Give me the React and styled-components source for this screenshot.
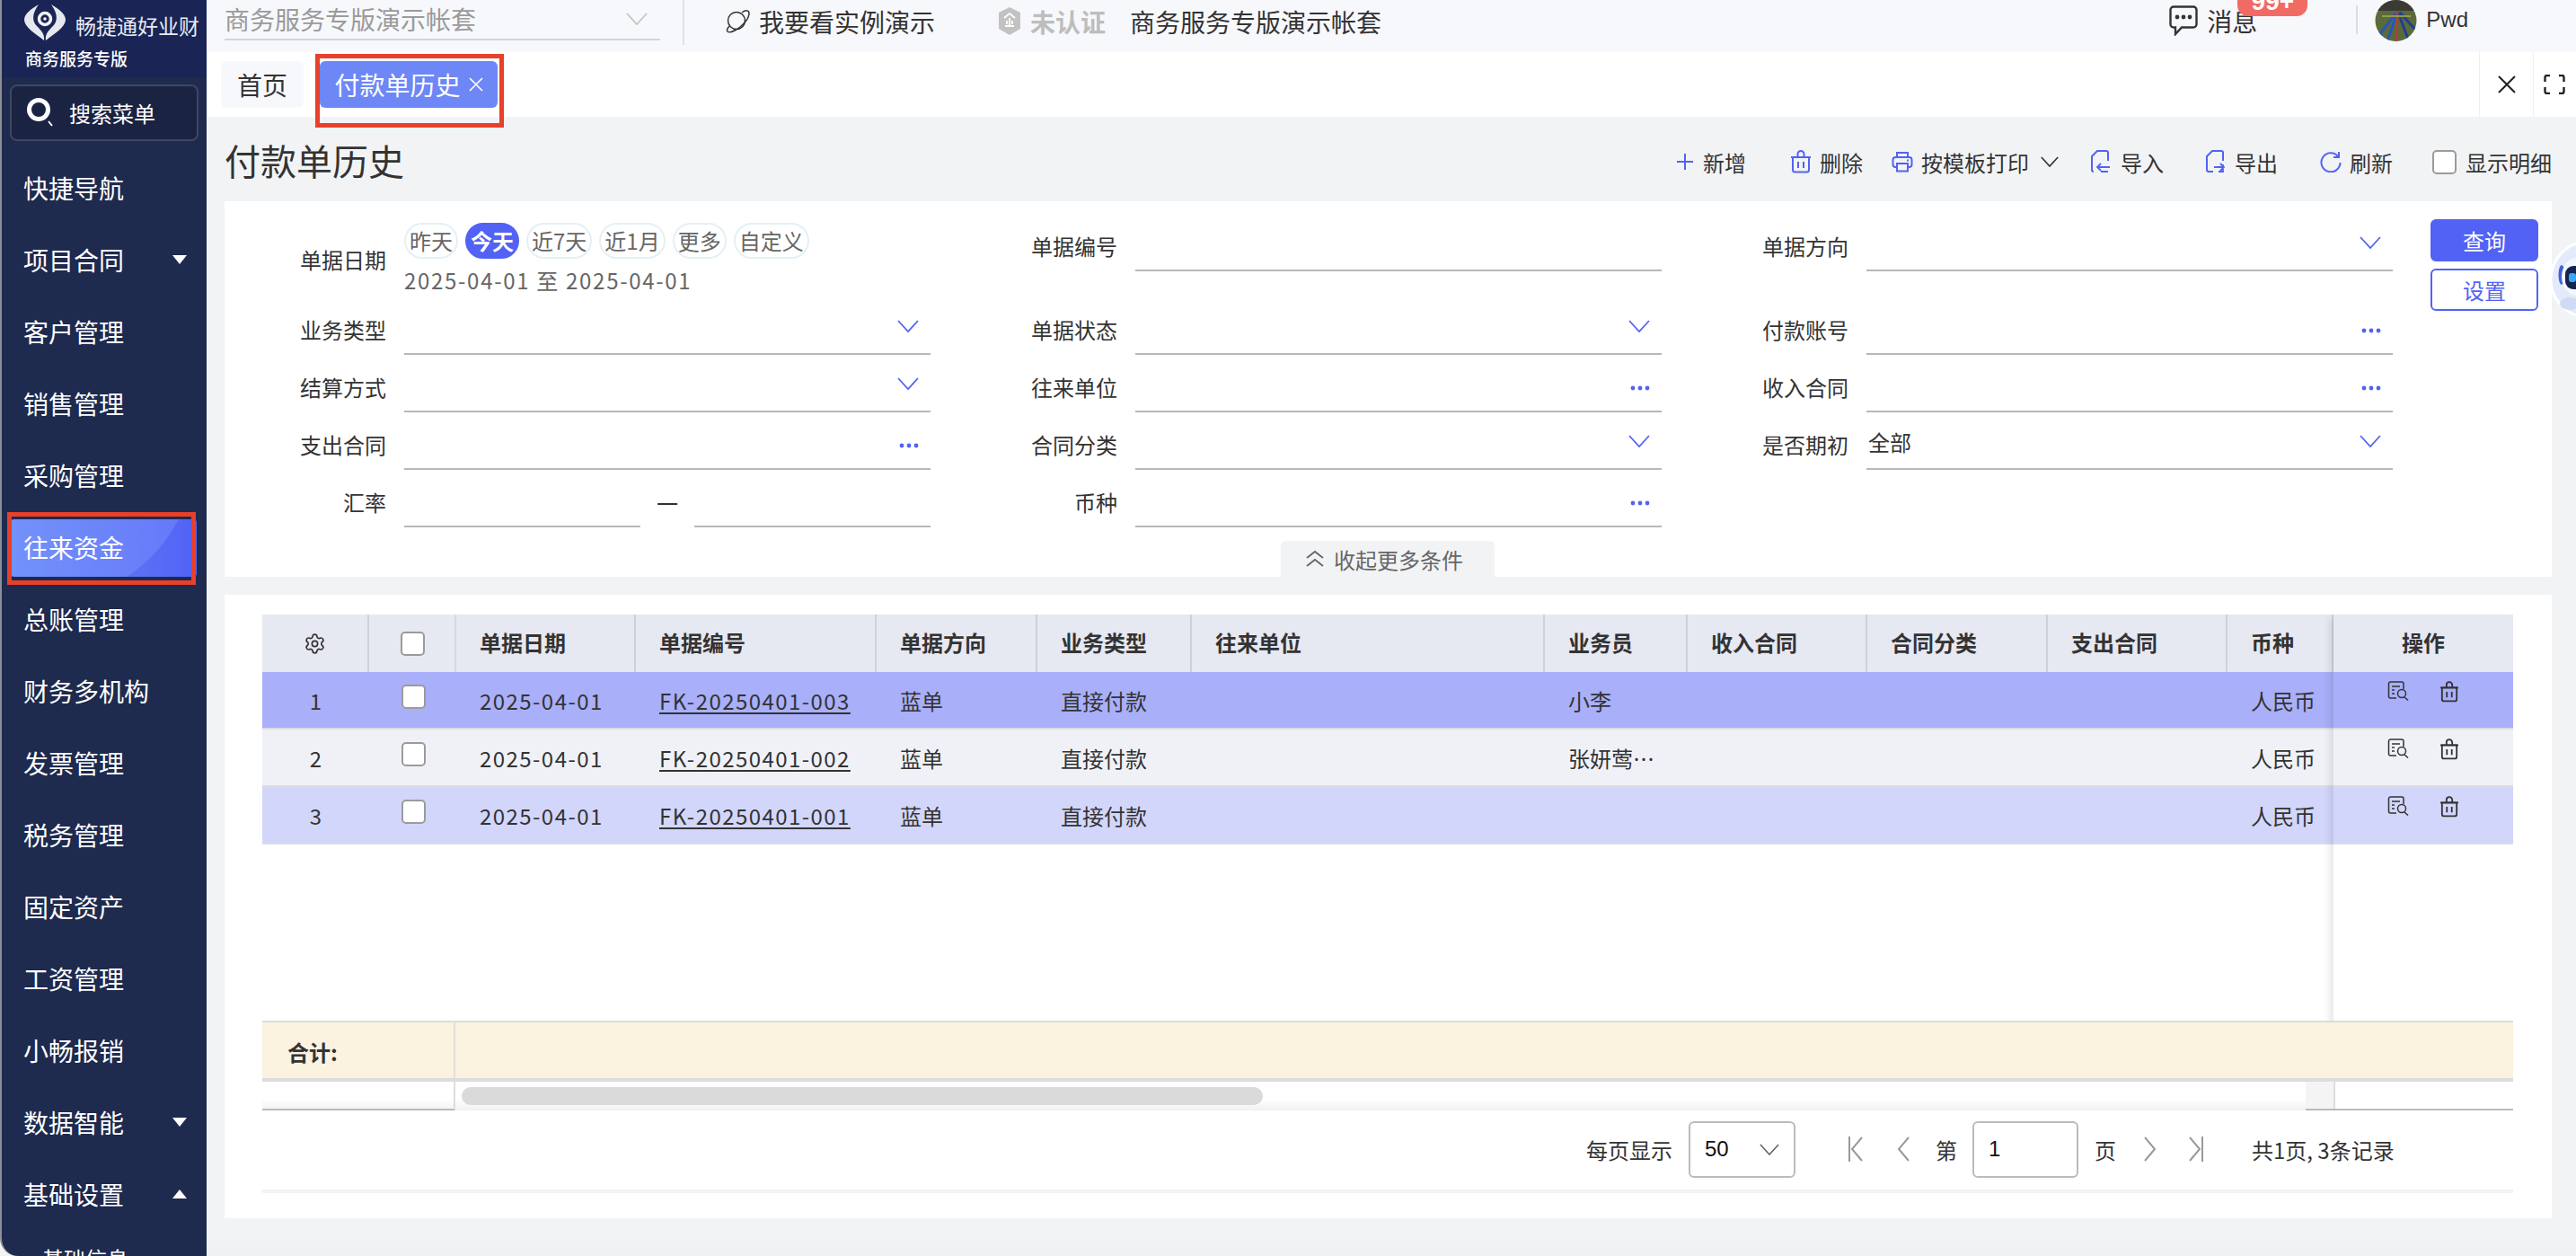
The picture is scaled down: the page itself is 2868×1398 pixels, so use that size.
import React from "react";
import styled, { createGlobalStyle } from "styled-components";
import { Settings } from "lucide-react";

const GlobalStyle = createGlobalStyle`
  html, body {
    margin: 0;
    padding: 0;
    width: 2868px;
    height: 1398px;
    overflow: hidden;
    background: #f2f3f5;
    font-family: "Noto Sans CJK SC", "Liberation Sans", sans-serif;
    color: #333;
  }
  * {
    box-sizing: border-box;
  }
`;

const menus = [
  { name: "快捷导航" },
  { name: "项目合同", arrow: "down" },
  { name: "客户管理" },
  { name: "销售管理" },
  { name: "采购管理" },
  { name: "往来资金", active: true },
  { name: "总账管理" },
  { name: "财务多机构" },
  { name: "发票管理" },
  { name: "税务管理" },
  { name: "固定资产" },
  { name: "工资管理" },
  { name: "小畅报销" },
  { name: "数据智能", arrow: "down" },
  { name: "基础设置", arrow: "up" },
];

const chips = ["昨天", "今天", "近7天", "近1月", "更多", "自定义"];

const columns = [
  { title: "单据日期", width: 200 },
  { title: "单据编号", width: 268 },
  { title: "单据方向", width: 179 },
  { title: "业务类型", width: 172 },
  { title: "往来单位", width: 393 },
  { title: "业务员", width: 159 },
  { title: "收入合同", width: 200 },
  { title: "合同分类", width: 201 },
  { title: "支出合同", width: 200 },
  { title: "币种", width: 118 },
];

const rows = [
  { no: "FK-20250401-003", man: "小李", bg: "#a9aff9" },
  { no: "FK-20250401-002", man: "张妍莺…", bg: "#f0f1f7" },
  { no: "FK-20250401-001", man: "", bg: "#d3d6fb" },
];

const ChevronDown = ({ color = "#5262f5", w = 24, h = 14 }) => (
  <svg width={w} height={h} viewBox="0 0 24 14" fill="none">
    <path d="M1 1 L12 13 L23 1" stroke={color} strokeWidth="1.8" />
  </svg>
);

const DotsWrap = styled.svg`
  && {
    margin-top: 12px;
  }
`;

const Dots = () => (
  <DotsWrap width="22" height="6" viewBox="0 0 22 6">
    <circle cx="3" cy="3" r="2.4" fill="#5262f5" />
    <circle cx="11" cy="3" r="2.4" fill="#5262f5" />
    <circle cx="19" cy="3" r="2.4" fill="#5262f5" />
  </DotsWrap>
);

const TrashIcon = ({ color = "#5262f5", size = 22 }) => (
  <svg width={size} height={size + 4} viewBox="0 0 22 26" fill="none" stroke={color} strokeWidth="2">
    <path d="M2 8 H20 V22 a2.5 2.5 0 0 1 -2.5 2.5 H4.5 A2.5 2.5 0 0 1 2 22 Z" />
    <path d="M0 8 H22" />
    <path d="M7.5 8 V4.5 a3.5 3.5 0 0 1 7 0 V8" />
    <path d="M8 13 V20 M14 13 V20" />
  </svg>
);

const PrintIcon = () => (
  <svg width="24" height="24" viewBox="0 0 24 24" fill="none" stroke="#5262f5" strokeWidth="2">
    <path d="M6 7 V2 H18 V7" />
    <rect x="1.5" y="7" width="21" height="11" rx="3" />
    <rect x="6" y="14" width="12" height="8.5" fill="#f2f3f5" />
    <path d="M17 10.5 H19" />
  </svg>
);

const FileIcon = ({ out }) => (
  <svg width="22" height="26" viewBox="0 0 22 26" fill="none" stroke="#5262f5" strokeWidth="2">
    <path d="M3 24 a2 2 0 0 1 -2 -2 V7 L7 1 H17 a2 2 0 0 1 2 2 V12" />
    {out ? (
      <path d="M8 24 H3 M19 16 V24 H14 M9 19 H20 M16 15 L20 19 L16 23" strokeWidth="1.8" />
    ) : (
      <path d="M19 24 H11 M21 19 H7 M11 15 L7 19 L11 23" strokeWidth="1.8" />
    )}
  </svg>
);

const RefreshIcon = () => (
  <svg width="24" height="24" viewBox="0 0 24 24" fill="none" stroke="#5262f5" strokeWidth="2">
    <path d="M20 6 A10.5 10.5 0 1 0 22.5 13" />
    <path d="M21 1 V7 H15" />
  </svg>
);

const Logo = () => (
  <svg width="48" height="44" viewBox="0 0 48 44">
    <path d="M17 1 C8 6 1 12 1 18 C1 26 14 34 23 41 C24 34 20 30 15 25 C10 20 9 12 17 1 Z" fill="#e6e8ef" />
    <path d="M31 1 C40 6 47 12 47 18 C47 26 34 34 25 41 C24 34 28 30 33 25 C38 20 39 12 31 1 Z" fill="#e6e8ef" />
    <circle cx="24" cy="17" r="6.5" fill="none" stroke="#f2f3f7" strokeWidth="3.5" />
    <circle cx="24" cy="17" r="1.8" fill="#f2f3f7" />
  </svg>
);

const Robot = () => (
  <svg width="29" height="90" viewBox="0 0 29 90">
    <circle cx="43" cy="45" r="42" fill="#e3eafa" stroke="#fff" strokeWidth="3" />
    <ellipse cx="13" cy="40" rx="3.5" ry="11" fill="#3f63d8" />
    <ellipse cx="30" cy="42" rx="17" ry="21" fill="#f4f7fe" />
    <rect x="17" y="30" width="20" height="26" rx="9" fill="#14244f" />
    <rect x="21" y="38" width="8" height="10" rx="3" fill="#38a8f5" />
    <ellipse cx="22" cy="72" rx="11" ry="7" fill="#cfdaf4" />
  </svg>
);

const Page = styled.div`
  width: 2868px;
  height: 1398px;
  display: flex;
  position: relative;
  overflow: hidden;
  background: #f2f3f5;
`;

const Sidebar = styled.aside`
  width: 230px;
  flex: none;
  height: 1398px;
  background: #1e2a4e;
  border-left: 2px solid #8d8f96;
  border-bottom-left-radius: 20px;
  overflow: hidden;
  color: #fff;
`;

const Brand = styled.div`
  height: 86px;
  background: #1a2555;
  padding: 4px 0 0 24px;
`;

const BrandTop = styled.div`
  display: flex;
  align-items: flex-start;
  gap: 11px;
  height: 46px;
`;

const BrandName = styled.span`
  font-size: 23px;
  line-height: 26px;
  margin-top: 11px;
  margin-left: -1px;
  color: #e9ebf2;
  white-space: nowrap;
`;

const BrandSub = styled.div`
  font-size: 19px;
  line-height: 26px;
  margin-top: 2px;
  margin-left: 2px;
  font-weight: 500;
`;

const SearchBox = styled.div`
  height: 63px;
  margin: 8px 9px 0 9px;
  background: #1a2342;
  border: 2px solid #3c4762;
  border-radius: 8px;
  display: flex;
  align-items: center;
  gap: 17px;
  padding-left: 17px;
  font-size: 24px;
`;

const MenuList = styled.nav`
  margin-top: 12px;
`;

const MenuItem = styled.div`
  height: 80px;
  display: flex;
  align-items: center;
  justify-content: space-between;
  padding: 0 22px 0 24px;
  font-size: 28px;
  position: relative;
`;

const ActiveItem = styled(MenuItem)`
  &::before {
    content: "";
    position: absolute;
    left: 10px;
    right: 11px;
    top: 9px;
    bottom: 7px;
    border-radius: 4px;
    background:
      radial-gradient(circle 165px at 40px -74px, rgba(128, 150, 255, 0.4) 99%, transparent 100%),
      linear-gradient(90deg, #6a8ff6, #5262f5);
  }
  span {
    position: relative;
  }
`;

const Marker = styled.div`
  position: absolute;
  border: 5px solid #e8402a;
  pointer-events: none;
  left: ${(p) => p.$left}px;
  top: ${(p) => p.$top}px;
  width: ${(p) => p.$width}px;
  height: ${(p) => p.$height}px;
`;

const Triangle = styled.i`
  width: 0;
  height: 0;
  border-left: 8px solid transparent;
  border-right: 8px solid transparent;
  ${(p) => (p.$up ? "border-bottom: 10px solid #fff;" : "border-top: 10px solid #fff;")}
`;

const SubItem = styled.div`
  padding-left: 45px;
  margin-top: 14px;
  font-size: 24px;
`;

const Main = styled.main`
  flex: 1;
  min-width: 0;
  display: flex;
  flex-direction: column;
`;

const TopBar = styled.header`
  height: 58px;
  background: #f7f8fc;
  display: flex;
  align-items: flex-start;
  padding-left: 20px;
  font-size: 28px;
  line-height: 48px;
`;

const AccountSelect = styled.div`
  width: 485px;
  height: 45px;
  border-bottom: 2px solid #d4d4d6;
  color: #9a9a9a;
  display: flex;
  justify-content: space-between;
  padding-right: 14px;
  line-height: 42px;
  svg {
    margin-top: 14px;
  }
`;

const VLine = styled.div`
  width: 2px;
  height: 50px;
  background: #e0e1e6;
  margin-left: 25px;
`;

const TopLink = styled.div`
  display: flex;
  align-items: center;
  height: 48px;
  gap: 10px;
  margin-left: ${(p) => p.$ml || 0}px;
  color: ${(p) => p.$color || "#333"};
  white-space: nowrap;
`;

const TopRight = styled.div`
  margin-left: auto;
  display: flex;
  align-items: flex-start;
`;

const MessageBox = styled.div`
  position: relative;
  display: flex;
  align-items: center;
  gap: 10px;
  height: 46px;
  width: 208px;
`;

const Badge = styled.span`
  position: absolute;
  left: 76px;
  top: -14px;
  width: 78px;
  height: 32px;
  background: #f26a64;
  border-radius: 12px;
  color: #fff;
  font-weight: 700;
  font-size: 28px;
  line-height: 32px;
  text-align: center;
  font-family: "Liberation Sans", sans-serif;
`;

const Divider = styled.div`
  width: 2px;
  height: 32px;
  margin-top: 6px;
  background: #dcdde2;
`;

const UserName = styled.span`
  font-family: "Liberation Sans", sans-serif;
  font-size: 24px;
  line-height: 44px;
  margin-left: 10px;
  margin-right: 120px;
`;

const Avatar = styled.svg`
  margin-left: 19px;
  display: block;
`;

const TabBar = styled.div`
  height: 72px;
  background: #fff;
  display: flex;
  align-items: flex-start;
  padding: 10px 0 0 16px;
  gap: 18px;
`;

const Tab = styled.div`
  height: 52px;
  border-radius: 6px;
  display: flex;
  align-items: center;
  justify-content: center;
  font-size: 28px;
  gap: 9px;
  white-space: nowrap;
  width: ${(p) => (p.$active ? "198px" : "92px")};
  background: ${(p) => (p.$active ? "#6e87f7" : "#f7f8fc")};
  color: ${(p) => (p.$active ? "#fff" : "#333")};
`;

const TabTools = styled.div`
  margin: -10px 0 0 auto;
  display: flex;
  height: 72px;
`;

const TabTool = styled.div`
  width: 60px;
  display: flex;
  align-items: center;
  justify-content: center;
  border-left: 1px solid #eeeff2;
  &:last-child {
    width: 48px;
    padding-right: 12px;
    justify-content: flex-end;
  }
`;

const Content = styled.div`
  flex: 1;
  min-height: 0;
  padding: 0 27px 0 20px;
  background: linear-gradient(#f2f3f5 1240px, #e8e9ec 1340px);
`;

const TitleRow = styled.div`
  height: 94px;
  display: flex;
  align-items: center;
`;

const Title = styled.h1`
  margin: 0;
  font-size: 40px;
  font-weight: 400;
  color: #333;
  position: relative;
  top: 1px;
`;

const Toolbar = styled.div`
  margin: 6px 0 0 auto;
  display: flex;
  align-items: center;
  height: 40px;
  font-size: 24px;
`;

const ToolBtn = styled.div`
  display: flex;
  align-items: center;
  gap: ${(p) => p.$gap || 10}px;
  margin-left: ${(p) => p.$ml}px;
  white-space: nowrap;
`;

const ToolCaret = styled.svg`
  margin-left: 4px;
`;

const CheckBox = styled.i`
  display: block;
  flex: none;
  width: 27px;
  height: 27px;
  border: 2px solid #9b9b9b;
  border-radius: 5px;
  background: #fff;
`;

const FilterPanel = styled.section`
  position: relative;
  height: 418px;
  background: #fff;
  display: flex;
  align-items: flex-start;
`;

const FilterGrid = styled.div`
  width: 2414px;
  padding-top: 14px;
  display: grid;
  grid-template-columns: repeat(3, 786px);
  column-gap: 28px;
  grid-auto-rows: 64px;
  grid-template-rows: 93px;
`;

const Field = styled.div`
  display: grid;
  grid-template-columns: 180px 586px;
  column-gap: 20px;
  align-items: start;
  font-size: 24px;
`;

const FieldLabel = styled.label`
  text-align: right;
  line-height: 34px;
  padding-top: ${(p) => p.$top || 19}px;
  color: #333;
`;

const InputLine = styled.div`
  height: 64px;
  border-bottom: 2px solid #b8b8b8;
  display: flex;
  align-items: center;
  justify-content: space-between;
  padding: 0 13px 0 2px;
  color: #333;
  line-height: 34px;
  > svg {
    margin-top: 2px;
  }
`;

const InputValue = styled.span`
  margin-top: 4px;
`;

const RangeRow = styled.div`
  display: grid;
  grid-template-columns: 263px 60px 263px;
`;

const RangeDash = styled.div`
  text-align: center;
  line-height: 34px;
  padding-top: 20px;
`;

const DateBlock = styled.div`
  padding-top: 10px;
`;

const ChipRow = styled.div`
  display: flex;
  gap: 8px;
`;

const Chip = styled.span`
  height: 40px;
  padding: 0 4px;
  border-radius: 20px;
  border: 2px solid ${(p) => (p.$active ? "#5262f5" : "#e4f0f5")};
  background: ${(p) => (p.$active ? "#5262f5" : "#fff")};
  color: ${(p) => (p.$active ? "#fff" : "#666")};
  font-weight: ${(p) => (p.$active ? 700 : 400)};
  font-size: 24px;
  line-height: 35px;
  white-space: nowrap;
`;

const DateText = styled.div`
  margin-top: 7px;
  color: #666;
  line-height: 34px;
  letter-spacing: 1.7px;
  white-space: nowrap;
`;

const QueryBtns = styled.div`
  margin-left: 42px;
  padding-top: 20px;
  display: flex;
  flex-direction: column;
  gap: 8px;
  width: 120px;
`;

const QueryBtn = styled.div`
  height: 47px;
  border-radius: 6px;
  border: 2px solid #5262f5;
  font-size: 24px;
  line-height: 43px;
  text-align: center;
  background: ${(p) => (p.$primary ? "#5262f5" : "#fff")};
  color: ${(p) => (p.$primary ? "#fff" : "#5262f5")};
`;

const Collapse = styled.div`
  position: absolute;
  left: 1176px;
  bottom: 0;
  width: 238px;
  height: 40px;
  padding-right: 8px;
  background: #f2f3f5;
  border-radius: 6px 6px 0 0;
  display: flex;
  align-items: center;
  justify-content: center;
  gap: 10px;
  font-size: 24px;
  color: #666;
`;

const TablePanel = styled.section`
  margin-top: 20px;
  height: 694px;
  background: #fff;
  padding: 22px 0 0 42px;
  position: relative;
`;

const TableWrap = styled.div`
  position: relative;
  width: 2506px;
`;

const HeadRow = styled.div`
  display: flex;
  height: 64px;
  background: #e6e8f2;
  font-weight: 700;
  font-size: 24px;
  line-height: 62px;
`;

const BodyRow = styled.div`
  display: flex;
  height: 64px;
  padding-top: 2px;
  background: ${(p) => p.$bg};
  border-bottom: 2px solid #dcdce4;
  font-size: 24px;
  line-height: 60px;
`;

const Cell = styled.div`
  flex: none;
  width: ${(p) => p.$w}px;
  padding-left: 26px;
  white-space: nowrap;
  overflow: hidden;
`;

const HeadCell = styled(Cell)`
  border-right: 2px solid #d0d1d8;
`;

const IndexCell = styled.div`
  flex: none;
  width: 119px;
  display: flex;
  align-items: center;
  justify-content: center;
`;

const HeadIndex = styled(IndexCell)`
  border-right: 2px solid #d0d1d8;
`;

const CheckCell = styled.div`
  flex: none;
  width: 97px;
  display: flex;
  align-items: center;
  padding-left: ${(p) => p.$pl}px;
  padding-bottom: ${(p) => p.$pb || 0}px;
`;

const HeadCheck = styled(CheckCell)`
  border-right: 2px solid #d8d9e0;
`;

const NumText = styled.span`
  letter-spacing: 1.45px;
`;

const LinkText = styled(NumText)`
  text-decoration: underline;
  text-decoration-thickness: 2px;
  text-underline-offset: 3px;
`;

const ActionCol = styled.div`
  position: absolute;
  right: 0;
  top: 0;
  width: 200px;
  height: 552px;
  box-shadow: -8px 0 8px -4px rgba(0, 0, 0, 0.1);
  background: #fff;
  display: flex;
  flex-direction: column;
`;

const ActionHead = styled.div`
  height: 64px;
  background: #e6e8f2;
  text-align: center;
  font-size: 24px;
  font-weight: 700;
  line-height: 62px;
`;

const ActionCell = styled.div`
  height: 64px;
  background: ${(p) => p.$bg};
  border-bottom: 2px solid #dcdce4;
  display: flex;
  align-items: flex-start;
  gap: 35px;
  padding: 10px 0 0 60px;
`;

const Spacer = styled.div`
  height: 196px;
`;

const TotalRow = styled.div`
  position: relative;
  height: 68px;
  background: #fbf2df;
  border-top: 2px solid #dcdcdc;
  border-bottom: 4px solid #dcdcdc;
  display: flex;
  font-size: 24px;
  font-weight: 700;
  line-height: 66px;
`;

const TotalLabel = styled.div`
  width: 215px;
  padding-left: 28px;
  border-right: 2px solid #e2e0da;
`;

const ScrollRow = styled.div`
  height: 32px;
  display: flex;
  background: linear-gradient(#fff 60%, #f1f1f1);
  position: relative;
`;

const ScrollLeft = styled.div`
  width: 215px;
  border-right: 2px solid #ddd;
  border-bottom: 2px solid #bbb;
`;

const ScrollThumb = styled.div`
  width: 892px;
  height: 20px;
  margin: 6px 0 0 7px;
  border-radius: 10px;
  background: #dadada;
`;

const ScrollRight = styled.div`
  position: absolute;
  right: 0;
  top: 0;
  width: 231px;
  height: 32px;
  padding-left: 31px;
  border-bottom: 2px solid #bbb;
  background: linear-gradient(90deg, #f4f4f4 0 31px, #fff 31px);
`;

const ScrollRightLine = styled.div`
  height: 100%;
  border-left: 2px solid #ddd;
`;

const Pager = styled.div`
  height: 92px;
  border-bottom: 4px solid #f3f3f3;
  display: flex;
  align-items: center;
  font-size: 24px;
  padding-bottom: 2px;
  padding-left: 1474px;
  white-space: nowrap;
`;

const PagerBox = styled.div`
  flex: none;
  width: ${(p) => p.$w}px;
  height: 63px;
  margin-left: ${(p) => p.$ml}px;
  border: 2px solid #bbb;
  border-radius: 6px;
  display: flex;
  align-items: center;
  justify-content: space-between;
  padding: 0 16px;
  color: #111;
  font-family: "Liberation Sans", sans-serif;
`;

const PagerIcon = styled.svg`
  flex: none;
  margin-left: ${(p) => p.$ml}px;
`;

const PagerText = styled.span`
  margin-left: ${(p) => p.$ml}px;
`;

const RobotDock = styled.div`
  position: absolute;
  right: 0;
  top: 266px;
  width: 29px;
  height: 90px;
  overflow: hidden;
`;

const BareIcon = styled.svg`
  flex: none;
`;

const App = () => {
  return (
    <Page>
      <GlobalStyle />
      <Sidebar>
        <Brand>
          <BrandTop>
            <Logo />
            <BrandName>畅捷通好业财</BrandName>
          </BrandTop>
          <BrandSub>商务服务专版</BrandSub>
        </Brand>
        <SearchBox>
          <BareIcon width="30" height="36" viewBox="0 0 30 36" fill="none">
            <circle cx="13" cy="14" r="10.5" stroke="#fff" strokeWidth="5" />
            <path d="M24 27 L28 32" stroke="#fff" strokeWidth="2" />
          </BareIcon>
          搜索菜单
        </SearchBox>
        <MenuList>
          {menus.map((m) => {
            const Row = m.active ? ActiveItem : MenuItem;
            return (
              <Row key={m.name}>
                <span>{m.name}</span>
                {m.arrow && <Triangle $up={m.arrow === "up"} />}
              </Row>
            );
          })}
          <SubItem>基础信息</SubItem>
        </MenuList>
      </Sidebar>

      <Main>
        <TopBar>
          <AccountSelect>
            商务服务专版演示帐套
            <ChevronDown color="#c4c4c4" w={24} h={14} />
          </AccountSelect>
          <VLine />
          <TopLink $ml={43}>
            <BareIcon width="30" height="30" viewBox="0 0 30 30" fill="none" stroke="#333" strokeWidth="1.5">
              <circle cx="15" cy="14" r="9.5" />
              <path d="M7 20 C2 26 5 29 13 25 C21 21 29 12 29 6 C29 2 25 2 21 5" />
            </BareIcon>
            我要看实例演示
          </TopLink>
          <TopLink $ml={70} $color="#bdbdbd">
            <BareIcon width="26" height="32" viewBox="0 0 26 32">
              <path d="M13 0 L25 6 V24 L13 31 L1 24 V6 Z" fill="#c2c2c2" />
              <path d="M13 7 L19 12 M13 7 L7 12 M8 21 H18 M13 12 V21 M10 15 V19 M16 15 V19" stroke="#fff" strokeWidth="1.8" fill="none" />
            </BareIcon>
            <strong>未认证</strong>
          </TopLink>
          <TopLink $ml={27}>商务服务专版演示帐套</TopLink>
          <TopRight>
            <MessageBox>
              <BareIcon width="32" height="34" viewBox="0 0 32 34" fill="none" stroke="#333" strokeWidth="2.4">
                <path d="M5 1.5 H27 a3.5 3.5 0 0 1 3.5 3.5 V21 a3.5 3.5 0 0 1 -3.5 3.5 H14 L7 32 V24.5 H5 a3.5 3.5 0 0 1 -3.5 -3.5 V5 A3.5 3.5 0 0 1 5 1.5 Z" />
                <circle cx="9" cy="13" r="1.2" fill="#333" />
                <circle cx="16" cy="13" r="1.2" fill="#333" />
                <circle cx="23" cy="13" r="1.2" fill="#333" />
              </BareIcon>
              消息
              <Badge>99+</Badge>
            </MessageBox>
            <Divider />
            <Avatar width="47" height="46" viewBox="0 0 47 46">
              <clipPath id="avatarClip">
                <circle cx="23.5" cy="23" r="23" />
              </clipPath>
              <g clipPath="url(#avatarClip)">
                <rect width="47" height="46" fill="#5b6a3a" />
                <rect width="47" height="12" fill="#3c3a34" />
                <path d="M24 14 L4 40 M25 14 L14 46" stroke="#2a55b8" strokeWidth="3" />
                <path d="M26 14 L38 46 M28 14 L46 34" stroke="#1f3f96" strokeWidth="3" />
                <path d="M25 14 L24 46" stroke="#a8423c" strokeWidth="3" />
                <path d="M8 18 H40" stroke="#8f9a4c" strokeWidth="2" />
              </g>
            </Avatar>
            <UserName>Pwd</UserName>
          </TopRight>
        </TopBar>

        <TabBar>
          <Tab>首页</Tab>
          <Tab $active>
            付款单历史
            <BareIcon width="16" height="16" viewBox="0 0 16 16" stroke="#fff" strokeWidth="1.6">
              <path d="M1 1 L15 15 M15 1 L1 15" />
            </BareIcon>
          </Tab>
          <TabTools>
            <TabTool>
              <BareIcon width="20" height="20" viewBox="0 0 20 20" stroke="#222" strokeWidth="2">
                <path d="M1 1 L19 19 M19 1 L1 19" />
              </BareIcon>
            </TabTool>
            <TabTool>
              <BareIcon width="24" height="22" viewBox="0 0 24 22" fill="none" stroke="#222" strokeWidth="2.4">
                <path d="M1.5 8 V3 a2 2 0 0 1 2 -2 H7 M17 1 H20.5 a2 2 0 0 1 2 2 V8 M22.5 14 V19 a2 2 0 0 1 -2 2 H17 M7 21 H3.5 a2 2 0 0 1 -2 -2 V14" />
              </BareIcon>
            </TabTool>
          </TabTools>
        </TabBar>

        <Content>
          <TitleRow>
            <Title>付款单历史</Title>
            <Toolbar>
              <ToolBtn $ml={0} $gap={11}>
                <BareIcon width="18" height="18" viewBox="0 0 18 18" stroke="#5262f5" strokeWidth="2">
                  <path d="M9 0 V18 M0 9 H18" />
                </BareIcon>
                新增
              </ToolBtn>
              <ToolBtn $ml={50} $gap={10}>
                <TrashIcon />
                删除
              </ToolBtn>
              <ToolBtn $ml={32} $gap={9}>
                <PrintIcon />
                按模板打印
                <ToolCaret width="20" height="12" viewBox="0 0 24 14" fill="none" stroke="#333" strokeWidth="2">
                  <path d="M1 1 L12 13 L23 1" />
                </ToolCaret>
              </ToolBtn>
              <ToolBtn $ml={36} $gap={11}>
                <FileIcon />
                导入
              </ToolBtn>
              <ToolBtn $ml={47} $gap={10}>
                <FileIcon out />
                导出
              </ToolBtn>
              <ToolBtn $ml={47} $gap={9}>
                <RefreshIcon />
                刷新
              </ToolBtn>
              <ToolBtn $ml={44}>
                <CheckBox />
                显示明细
              </ToolBtn>
            </Toolbar>
          </TitleRow>

          <FilterPanel>
            <FilterGrid>
              <Field>
                <FieldLabel $top={34}>单据日期</FieldLabel>
                <DateBlock>
                  <ChipRow>
                    {chips.map((c) => (
                      <Chip key={c} $active={c === "今天"}>
                        {c}
                      </Chip>
                    ))}
                  </ChipRow>
                  <DateText>2025-04-01 至 2025-04-01</DateText>
                </DateBlock>
              </Field>
              <Field>
                <FieldLabel>单据编号</FieldLabel>
                <InputLine />
              </Field>
              <Field>
                <FieldLabel>单据方向</FieldLabel>
                <InputLine>
                  <span />
                  <ChevronDown />
                </InputLine>
              </Field>

              <Field>
                <FieldLabel>业务类型</FieldLabel>
                <InputLine>
                  <span />
                  <ChevronDown />
                </InputLine>
              </Field>
              <Field>
                <FieldLabel>单据状态</FieldLabel>
                <InputLine>
                  <span />
                  <ChevronDown />
                </InputLine>
              </Field>
              <Field>
                <FieldLabel>付款账号</FieldLabel>
                <InputLine>
                  <span />
                  <Dots />
                </InputLine>
              </Field>

              <Field>
                <FieldLabel>结算方式</FieldLabel>
                <InputLine>
                  <span />
                  <ChevronDown />
                </InputLine>
              </Field>
              <Field>
                <FieldLabel>往来单位</FieldLabel>
                <InputLine>
                  <span />
                  <Dots />
                </InputLine>
              </Field>
              <Field>
                <FieldLabel>收入合同</FieldLabel>
                <InputLine>
                  <span />
                  <Dots />
                </InputLine>
              </Field>

              <Field>
                <FieldLabel>支出合同</FieldLabel>
                <InputLine>
                  <span />
                  <Dots />
                </InputLine>
              </Field>
              <Field>
                <FieldLabel>合同分类</FieldLabel>
                <InputLine>
                  <span />
                  <ChevronDown />
                </InputLine>
              </Field>
              <Field>
                <FieldLabel>是否期初</FieldLabel>
                <InputLine>
                  <InputValue>全部</InputValue>
                  <ChevronDown />
                </InputLine>
              </Field>

              <Field>
                <FieldLabel>汇率</FieldLabel>
                <RangeRow>
                  <InputLine />
                  <RangeDash>一</RangeDash>
                  <InputLine />
                </RangeRow>
              </Field>
              <Field>
                <FieldLabel>币种</FieldLabel>
                <InputLine>
                  <span />
                  <Dots />
                </InputLine>
              </Field>
            </FilterGrid>
            <QueryBtns>
              <QueryBtn $primary>查询</QueryBtn>
              <QueryBtn>设置</QueryBtn>
            </QueryBtns>
            <Collapse>
              <BareIcon width="22" height="20" viewBox="0 0 22 20" fill="none" stroke="#666" strokeWidth="1.8">
                <path d="M2 9 L11 2 L20 9 M2 18 L11 11 L20 18" />
              </BareIcon>
              收起更多条件
            </Collapse>
          </FilterPanel>

          <TablePanel>
            <TableWrap>
              <HeadRow>
                <HeadIndex>
                  <Settings size={25} strokeWidth={1.6} color="#333" />
                </HeadIndex>
                <HeadCheck $pl={35}>
                  <CheckBox />
                </HeadCheck>
                {columns.map((c) => (
                  <HeadCell key={c.title} $w={c.width}>
                    {c.title}
                  </HeadCell>
                ))}
              </HeadRow>
              {rows.map((r, i) => (
                <BodyRow key={r.no} $bg={r.bg}>
                  <IndexCell>{i + 1}</IndexCell>
                  <CheckCell $pl={36} $pb={10}>
                    <CheckBox />
                  </CheckCell>
                  <Cell $w={200}>
                    <NumText>2025-04-01</NumText>
                  </Cell>
                  <Cell $w={268}>
                    <LinkText>{r.no}</LinkText>
                  </Cell>
                  <Cell $w={179}>蓝单</Cell>
                  <Cell $w={172}>直接付款</Cell>
                  <Cell $w={393} />
                  <Cell $w={159}>{r.man}</Cell>
                  <Cell $w={200} />
                  <Cell $w={201} />
                  <Cell $w={200} />
                  <Cell $w={118}>人民币</Cell>
                </BodyRow>
              ))}
              <ActionCol>
                <ActionHead>操作</ActionHead>
                {rows.map((r) => (
                  <ActionCell key={r.no} $bg={r.bg}>
                    <BareIcon width="24" height="22" viewBox="0 0 24 22" fill="none" stroke="#333" strokeWidth="1.5">
                      <path d="M10 19 H3.5 a2 2 0 0 1 -2 -2 V3 a2 2 0 0 1 2 -2 H16 a2 2 0 0 1 2 2 V9" />
                      <path d="M5 6 H14 M5 10 H8 M5 14 H8" />
                      <circle cx="16" cy="14" r="4.5" />
                      <path d="M19 18 L23 21.5" />
                    </BareIcon>
                    <TrashIcon color="#333" size={20} />
                  </ActionCell>
                ))}
              </ActionCol>
              <Spacer />
              <TotalRow>
                <TotalLabel>合计:</TotalLabel>
              </TotalRow>
              <ScrollRow>
                <ScrollLeft />
                <ScrollThumb />
                <ScrollRight>
                  <ScrollRightLine />
                </ScrollRight>
              </ScrollRow>
              <Pager>
                每页显示
                <PagerBox $w={119} $ml={18}>
                  50
                  <ChevronDown color="#666" w={22} h={13} />
                </PagerBox>
                <PagerIcon $ml={58} width="18" height="28" viewBox="0 0 18 28" fill="none" stroke="#999" strokeWidth="2">
                  <path d="M2 0 V28 M16 1 L5 14 L16 27" />
                </PagerIcon>
                <PagerIcon $ml={36} width="16" height="28" viewBox="0 0 16 28" fill="none" stroke="#999" strokeWidth="2">
                  <path d="M14 1 L3 14 L14 27" />
                </PagerIcon>
                <PagerText $ml={28}>第</PagerText>
                <PagerBox $w={118} $ml={17}>1</PagerBox>
                <PagerText $ml={18}>页</PagerText>
                <PagerIcon $ml={30} width="16" height="28" viewBox="0 0 16 28" fill="none" stroke="#999" strokeWidth="2">
                  <path d="M2 1 L13 14 L2 27" />
                </PagerIcon>
                <PagerIcon $ml={34} width="18" height="28" viewBox="0 0 18 28" fill="none" stroke="#999" strokeWidth="2">
                  <path d="M16 0 V28 M2 1 L13 14 L2 27" />
                </PagerIcon>
                <PagerText $ml={53}>共1页, 3条记录</PagerText>
              </Pager>
            </TableWrap>
          </TablePanel>
        </Content>
      </Main>

      <RobotDock>
        <Robot />
      </RobotDock>
      <Marker $left={351} $top={60} $width={210} $height={82} />
      <Marker $left={8} $top={570} $width={210} $height={81} />
    </Page>
  );
};

export default App;
